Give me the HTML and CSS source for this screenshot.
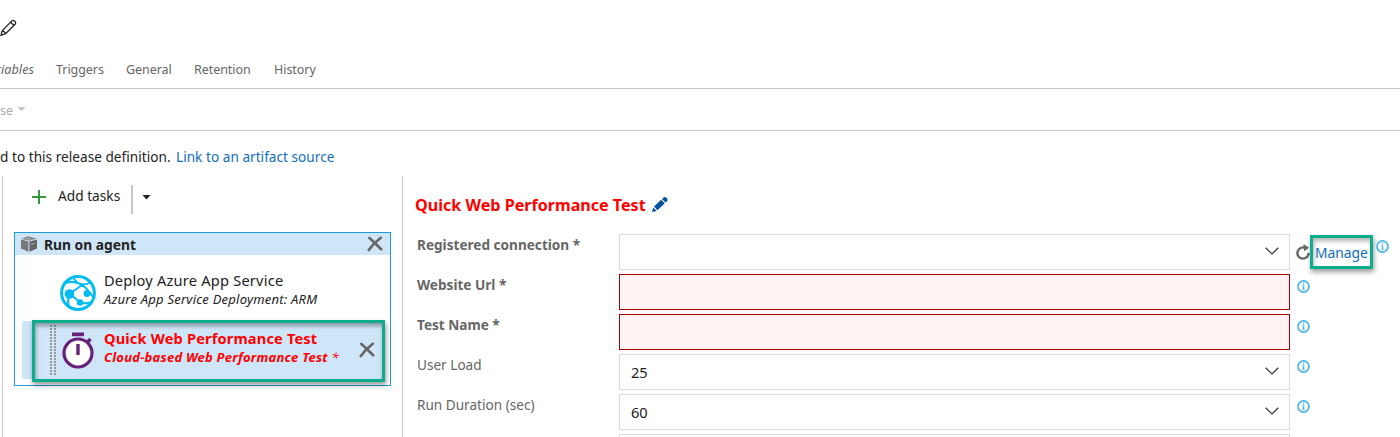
FILE: index.html
```html
<!DOCTYPE html>
<html lang="en">
<head>
<meta charset="utf-8">
<title>Release definition</title>
<link rel="stylesheet" href="styles.css">
</head>
<body>
<svg class="defs" width="0" height="0">
  <symbol id="info" viewBox="0 0 13 13"><circle cx="6.5" cy="6.5" r="5.5" fill="#fff" stroke="#55b7e8" stroke-width="1.8"/><path d="M6.500 5.300v4.200" fill="none" stroke="#55b7e8" stroke-width="1.500"/><path d="M5.300 5.600h1M5.300 9.500h2.500" stroke="#55b7e8" stroke-width=".7"/><rect x="5.800" y="3" width="1.500" height="1.400" fill="#55b7e8"/></symbol>
  <symbol id="chev" viewBox="0 0 14 8"><path d="M.7.8 7 7 13.3.8" fill="none" stroke="#333" stroke-width="1.2"/></symbol>
  <symbol id="close" viewBox="0 0 16 16"><path d="M2.400 2C5 4 9 8.400 14.200 13.200M13.800 1.800C9 5.500 5 9.500 1.800 14" fill="none" stroke="#666" stroke-width="2.700" stroke-linecap="round"/></symbol>
</svg>
<header class="top">
  <div class="name"><svg width="17" height="18" viewBox="0 0 17 18"><path d="M1 16.200 2.200 11.800 11.800 1.900Q13 .8 14.600 2T15.300 5L5.600 14.800ZM10.600 3.200l3.600 3.600M2.200 11.800q2.600.4 3.400 3" fill="none" stroke="#222" stroke-width="1.300"/></svg></div>
  <nav class="tabs"><span class="tab variables">Variables</span><span class="tab t1">Triggers</span><span class="tab t2">General</span><span class="tab t3">Retention</span><span class="tab">History</span></nav>
</header>
<div class="toolbar"><span>se</span><i class="caret pale"></i></div>
<p class="notice"><span class="msg">d to this release definition.</span><a>Link to an artifact source</a></p>
<main class="panes">
  <section class="tasks">
    <div class="add">
      <svg width="14" height="14" viewBox="0 0 14 14"><path d="M7 0v14M0 7h14" stroke="#339933" stroke-width="2"/></svg>
      <span>Add tasks</span><b class="sep"></b><i class="caret"></i>
    </div>
    <div class="agent">
      <div class="agent-head">
        <svg width="16" height="16" viewBox="0 0 16 16"><path d="M.5 2.800 7 .3l8.500 2.200L8 4.800Z" fill="#858585"/><path d="M0 3.500 7.400 5.600V15.800L0 12.600Z" fill="#777"/><path d="M8.400 5.600 16 3.400v9L8.400 15.800Z" fill="#666"/><path d="m5 2.200 5 1.200M10 8.500l4-1.200" stroke="#b5c5d2" stroke-width=".8"/></svg>
        <span>Run on agent</span>
        <svg class="close" width="16" height="16"><use href="#close"/></svg>
      </div>
      <div class="task">
        <svg width="36" height="36" viewBox="0 0 36 36"><circle cx="18" cy="18" r="16.400" fill="#fff" stroke="#00bcf2" stroke-width="3"/><path d="M6 8q8-3 16 2M13 3Q17 8 22 10M22 10 9.500 19M22 10q6-1 9-3M22 10q6 4 11 12M9.500 19l10.500 8M9.500 19Q7 26 9 31M20 27.500q7 2 12-1" fill="none" stroke="#00bcf2" stroke-width="2"/><circle cx="9.500" cy="19" r="4.800" fill="#00bcf2"/><circle cx="27" cy="18.500" r="3.400" fill="#00bcf2"/><circle cx="20" cy="27.500" r="3.200" fill="#00bcf2"/><circle cx="22" cy="10" r="2" fill="#00bcf2"/></svg>
        <div class="label"><div class="title">Deploy Azure App Service</div><div class="sub">Azure App Service Deployment: ARM</div></div>
      </div>
      <div class="task selected">
        <i class="grip"></i>
        <svg width="32" height="37" viewBox="0 0 32 37"><path d="M10 .5h12v3.700H10Z" fill="#68217a"/><path d="m25.500 10 3-3" stroke="#68217a" stroke-width="3.500"/><circle cx="16" cy="21" r="14" fill="#fff" stroke="#68217a" stroke-width="3.200"/><path d="M16 12v11" stroke="#68217a" stroke-width="3.400"/></svg>
        <div class="label"><div class="title">Quick Web Performance Test</div><div class="sub">Cloud-based Web Performance Test <span class="req">*</span></div></div>
        <svg class="close" width="16" height="16"><use href="#close"/></svg>
        <div class="mark"></div>
      </div>
    </div>
  </section>
  <section class="details">
    <h1><span>Quick Web Performance Test</span><svg width="16" height="15" viewBox="0 0 16 15"><path d="M0 15 1.200 10.500 4.700 14Z M2 9.500 9.200 2.700 12.800 6.200 5.500 13.200Z M10 2 11.900.3Q13-.4 14.600 1T15.300 4L13.600 5.500Z" fill="#00539f"/></svg></h1>
    <div class="row"><label>Registered connection *</label><div class="field"><svg width="14" height="8"><use href="#chev"/></svg></div>
      <svg class="refresh" width="15" height="17" viewBox="0 0 15 17"><path d="M8.700 3.700A5.600 5.600 0 1 0 12.600 9" fill="none" stroke="#666" stroke-width="2.400"/><path d="m7.500 0 5.500 3.700-5 3.600Z" fill="#666"/></svg>
      <a class="manage">Manage</a><svg class="info high" width="13" height="13"><use href="#info"/></svg></div>
    <div class="row"><label>Website Url *</label><div class="field invalid"></div><svg class="info" width="13" height="13"><use href="#info"/></svg></div>
    <div class="row"><label>Test Name *</label><div class="field invalid"></div><svg class="info" width="13" height="13"><use href="#info"/></svg></div>
    <div class="row"><label class="light">User Load</label><div class="field"><span>25</span><svg width="14" height="8"><use href="#chev"/></svg></div><svg class="info" width="13" height="13"><use href="#info"/></svg></div>
    <div class="row"><label class="light">Run Duration (sec)</label><div class="field"><span>60</span><svg width="14" height="8"><use href="#chev"/></svg></div><svg class="info" width="13" height="13"><use href="#info"/></svg></div>
    <div class="row last"><label></label><div class="field"></div></div>
  </section>
</main>
</body>
</html>
```
FILE: styles.css
```css
* { box-sizing: border-box; }
body { margin: 0; width: 1400px; height: 437px; overflow: hidden; background: #fff; color: #222; font: 14px/20px "Noto Sans", "Open Sans", sans-serif; white-space: nowrap; }
svg { display: block; flex: none; }
.defs { display: none; }
a { color: #106ebe; }
.top { height: 89px; border-bottom: 1px solid #c8c8c8; padding-top: 19px; }
.name { height: 41px; }
.tabs { display: flex; color: #666; font-size: 12.5px; line-height: 20px; letter-spacing: -.05px; }
.tab { flex: none; }
.variables { width: 34px; margin-right: 22px; display: flex; justify-content: flex-end; overflow: hidden; font-style: italic; letter-spacing: .1px; }
.t1 { width: 70px; }
.t2 { width: 68px; }
.t3 { width: 80px; }
.toolbar { height: 42px; border-bottom: 1px solid #c8c8c8; display: flex; align-items: center; gap: 4px; color: #aaa; font-size: 12.5px; padding-top: 2px; }
.caret { width: 9px; height: 5px; background: #222; clip-path: polygon(0 0, 100% 0, 50% 100%); }
.caret.pale { background: #c8c8c8; margin-top: -3px; }
.notice { margin: 0; height: 45px; padding-top: 16px; display: flex; font-size: 13.6px; letter-spacing: .03px; }
.msg { width: 176px; }
.panes { display: flex; height: 261px; padding-left: 2px; }
.tasks { width: 400px; border-left: 1px solid #c8c8c8; padding-left: 11px; }
.add { height: 56px; display: flex; align-items: center; padding: 0 0 14px 18px; }
.add span { width: 73px; margin-left: 12px; font-size: 13.7px; margin-top: -3px; }
.add .sep { width: 2px; height: 29px; background: #c8c8c8; margin: 5px 9px 0 0; }
.agent { width: 377px; height: 154px; border: 1px solid #1c9dd8; }
.agent-head { height: 22px; background: #cfe6f9; display: flex; align-items: center; padding: 0 7px 0 6px; gap: 7px; font-weight: 700; font-size: 13.8px; margin-bottom: 8px; }
.agent-head span { padding-top: 2px; }
.close { margin-left: auto; }
.task { height: 58px; margin-left: 7px; padding-left: 38px; display: flex; align-items: center; gap: 8px; position: relative; }
.task:not(.selected) { padding-top: 2px; }
.label { margin-top: -8px; }
.title { font-size: 14.6px; line-height: 19px; letter-spacing: .22px; }
.sub { font-size: 13px; line-height: 18px; font-style: italic; letter-spacing: .23px; }
.selected { background: #cfe6f9; color: #f00; width: 361px; padding: 0 8px 0 28px; gap: 0; font-weight: 700; }
.selected .label { margin-left: 10px; margin-top: -6px; }
.selected .title { letter-spacing: .16px; }
.req { font-weight: 400; }
.grip { width: 6px; height: 50px; margin-right: 6px; background: repeating-linear-gradient(#999 0 2px, transparent 2px 3px); clip-path: polygon(0 0, 2px 0, 2px 100%, 4px 100%, 4px 0, 6px 0, 6px 100%, 0 100%); }
.mark { position: absolute; left: 10px; top: -1px; width: 353px; height: 62px; border: 3px solid #0cad8c; box-shadow: 1px 3px 5px rgba(0,0,0,.4), inset 1px 3px 4px rgba(0,0,0,.35); }
.details { width: 998px; border-left: 1px solid #c8c8c8; padding: 19px 0 0 12px; }
h1 { margin: 0 0 19px; height: 20px; color: #f00; font-size: 16.1px; line-height: 20px; display: flex; gap: 6px; align-items: center; }
h1 svg { margin-top: -2px; }
.row { display: flex; height: 36px; margin-bottom: 4px; padding-left: 2px; }
.row.last { height: 3px; margin: 0; overflow: hidden; }
label { width: 202px; flex: none; color: #666; font-weight: 700; font-size: 13.6px; line-height: 21px; }
label.light { font-weight: 400; }
.field { width: 671px; height: 36px; flex: none; border: 1px solid #dcdcdc; padding: 0 10px 0 11px; display: flex; align-items: center; justify-content: flex-end; color: #222; font-size: 14.6px; }
.field span { margin-right: auto; margin-top: -1px; }
.field svg { margin-top: -2px; }
.invalid { border-color: #a80000; background: #fff2f2; }
.info { margin: 6px 0 0 7px; }
.refresh { margin: 10px 0 0 6px; }
.manage { width: 63px; height: 34px; margin: 1px 3px 0 -1px; border: 3px solid #0cad8c; text-align: center; font-size: 13.8px; line-height: 29px; box-shadow: 1px 3px 5px rgba(0,0,0,.4), inset 1px 3px 4px rgba(0,0,0,.3); }
.info.high { margin: 6px 0 0; }
```
